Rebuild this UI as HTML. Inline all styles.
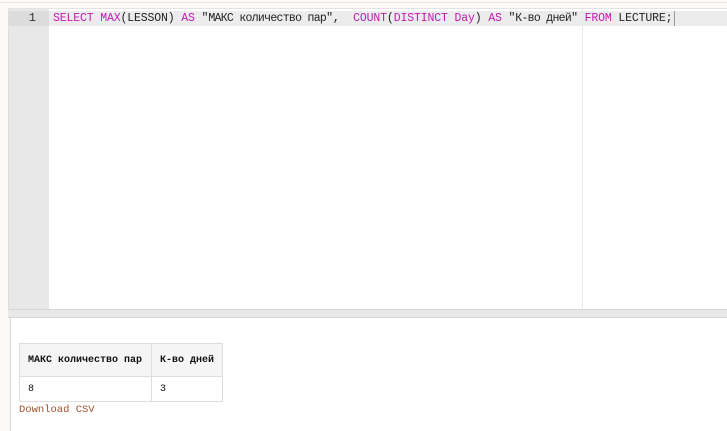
<!DOCTYPE html>
<html><head><meta charset="utf-8"><style>
body{margin:0;width:727px;height:431px;background:#fbfaf8;position:relative;overflow:hidden;font-family:"Liberation Mono","DejaVu Sans Mono",monospace}
.top{position:absolute;left:0;top:0;width:727px;height:2px;border-bottom:1px solid #e6e6e6;background:#fbfaf8}
.ed{position:absolute;left:8px;top:8px;width:719px;height:300px;background:#fff;border-left:1px solid #ddd;border-top:1px solid #e3e3e3;overflow:hidden}
.gut{position:absolute;left:0;top:0;width:40px;height:300px;background:#e8e8e8}
.hl{position:absolute;left:40px;top:2px;width:679px;height:15px;background:#ececec}
.gl{position:absolute;left:0;top:2px;width:40px;height:15px;background:#dcdcdc;font-size:12px;line-height:15px;text-align:right;box-sizing:border-box;padding-right:13px;color:#333}
.pm{position:absolute;left:573px;top:0;width:1px;height:300px;background:#e8e8e8}
.code{position:absolute;left:44px;top:2px;font-size:11.5px;line-height:15px;white-space:pre;color:#222;letter-spacing:-0.15px}
.k{color:#c31ab3}.c{letter-spacing:-0.7px}
.cur{position:absolute;left:665px;top:2px;width:1px;height:15px;background:#999}
.band{position:absolute;left:8px;top:309px;width:719px;height:9px;background:#e8e8e8;border-top:1px solid #d6d6d6;border-bottom:1px solid #d6d6d6;box-sizing:border-box}
.res{position:absolute;left:10px;top:318px;width:717px;height:113px;background:#fff;border-left:1px solid #d6d6d6}
table{position:absolute;left:8px;top:25px;border-collapse:collapse;font-size:10px;color:#111}
td,th{border:1px solid #ddd;text-align:left;padding:0 8px;font-weight:normal}
th{background:#f5f5f5;height:32px;font-weight:bold}
td{height:24px}
.dl{position:absolute;left:8px;top:86px;font-size:10.5px;color:#a0522d}
</style></head><body>
<div class="top"></div>
<div class="ed">
<div class="gut"></div><div class="hl"></div><div class="gl">1</div><div class="pm"></div>
<div class="code"><span class="k">SELECT MAX</span>(LESSON) <span class="k">AS</span> "<span class="c">МАКС количество пар</span>",  <span class="k">COUNT</span>(<span class="k">DISTINCT Day</span>) <span class="k">AS</span> "<span class="c">К-во дней</span>" <span class="k">FROM</span> LECTURE;</div>
<div class="cur"></div>
</div>
<div class="band"></div>
<div class="res">
<table><tr><th style="width:115px">МАКС количество пар</th><th style="width:54px">К-во дней</th></tr>
<tr><td>8</td><td>3</td></tr></table>
<div class="dl">Download CSV</div>
</div>
</body></html>
